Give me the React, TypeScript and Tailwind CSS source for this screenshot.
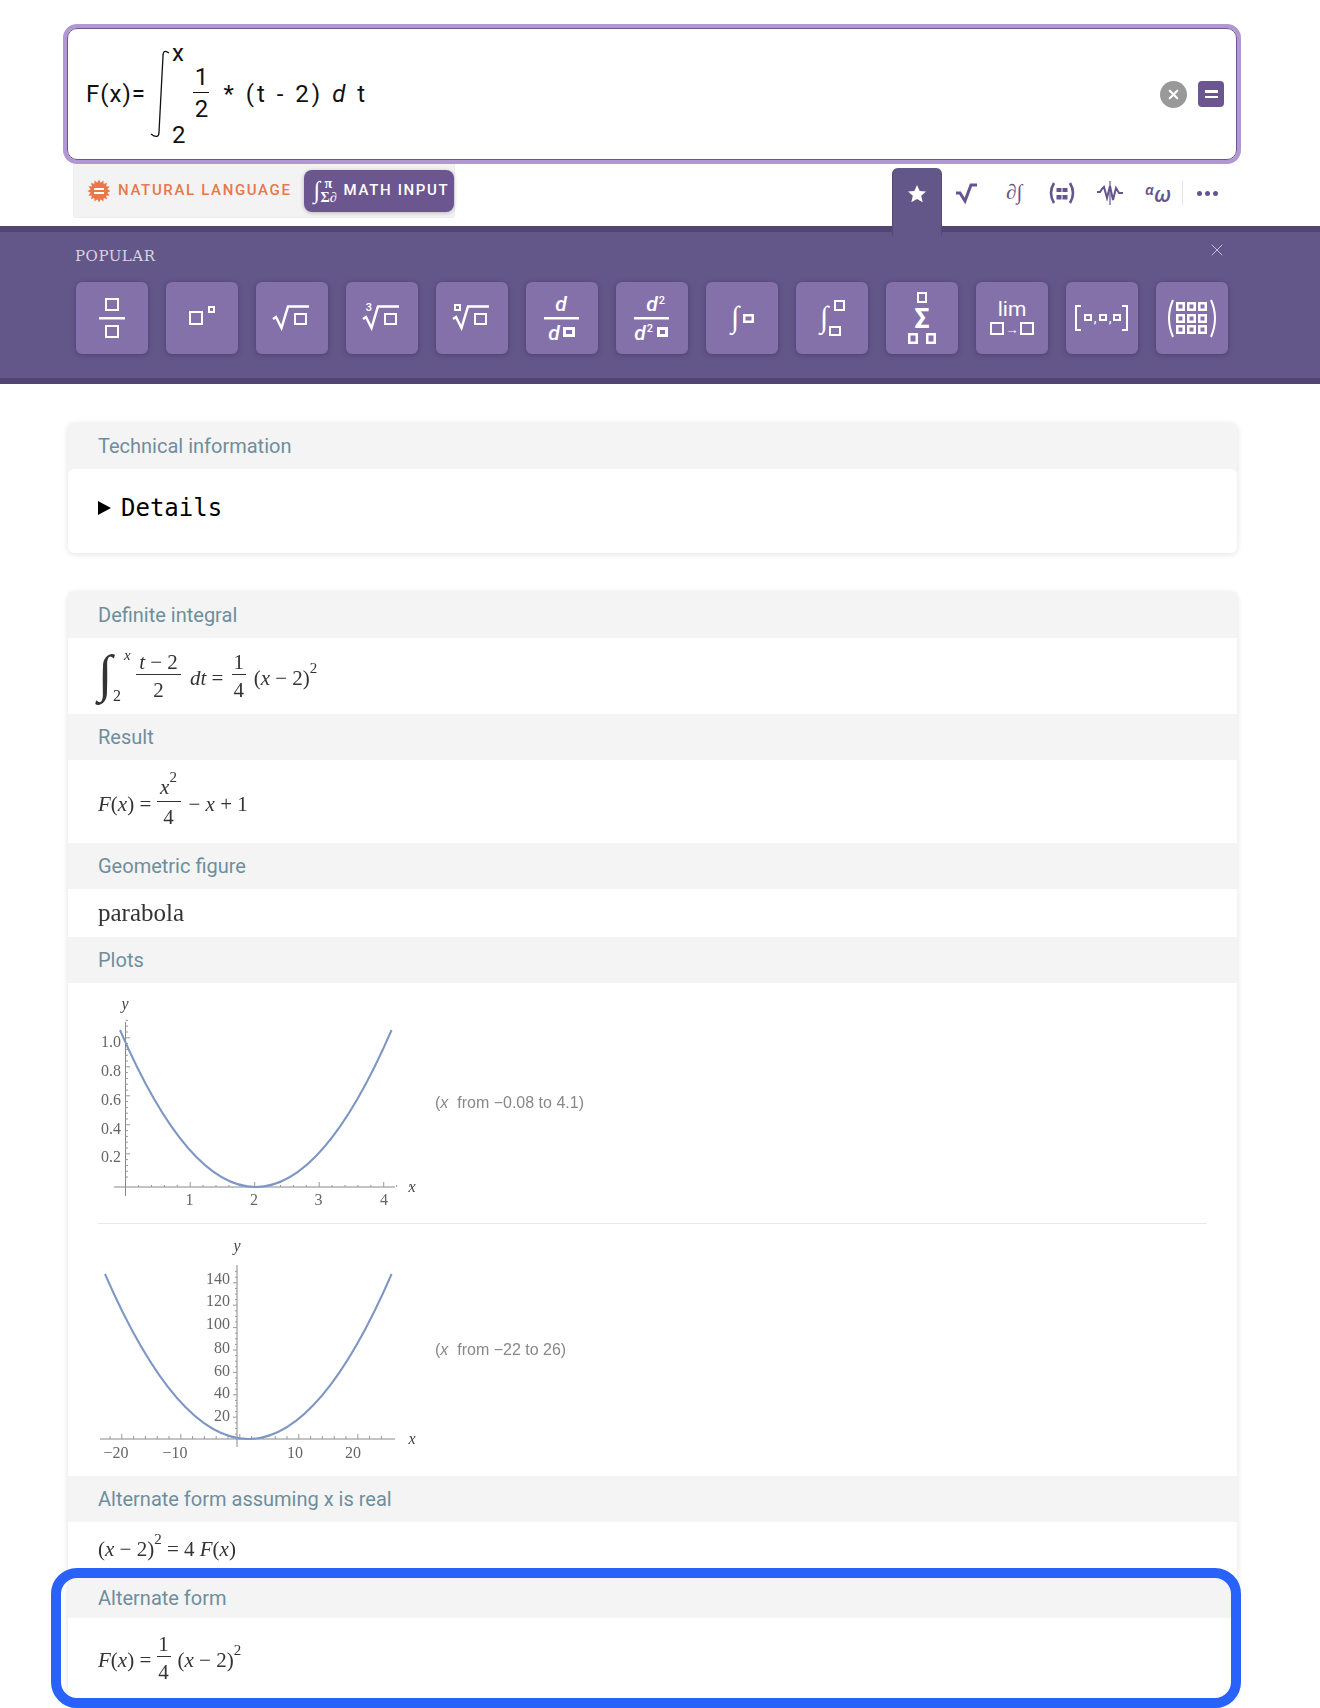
import type { ReactNode } from 'react'
import { X } from 'lucide-react'

const serif = { fontFamily: '"Liberation Serif", serif' }

function Sq({ x, y, w, h, sw = 2 }: { x: number; y: number; w: number; h: number; sw?: number }) {
  return <rect x={x + sw / 2} y={y + sw / 2} width={w - sw} height={h - sw} fill="none" stroke="#fff" strokeWidth={sw} />
}

function Root() {
  return <path d="M17 37 L20 35 L25.5 46 L32 24.5 L53 24.5" fill="none" stroke="#fff" strokeWidth="2.5" />
}

function Label({ x, y, size, children, italic, weight = 500, family = 'Roboto, sans-serif' }: {
  x: number; y: number; size: number; children: ReactNode; italic?: boolean; weight?: number; family?: string
}) {
  return (
    <text x={x} y={y} fontSize={size} fill="#fff" textAnchor="middle" fontWeight={weight} fontStyle={italic ? 'italic' : 'normal'} fontFamily={family}>
      {children}
    </text>
  )
}

const keys: ReactNode[] = [
  <>
    <Sq x={29} y={16} w={14} h={13} />
    <rect x={23} y={35} width={26} height={2.5} fill="#fff" />
    <Sq x={29} y={43} w={14} h={13} />
  </>,
  <>
    <Sq x={23} y={29} w={14} h={14} />
    <Sq x={42} y={24} w={7} h={7} />
  </>,
  <>
    <Root />
    <Sq x={38} y={31} w={13} h={12} />
  </>,
  <>
    <Root />
    <Sq x={38} y={31} w={13} h={12} />
    <Label x={23} y={29} size={11}>3</Label>
  </>,
  <>
    <Root />
    <Sq x={38} y={31} w={13} h={12} />
    <Sq x={18} y={22} w={7} h={7} />
  </>,
  <>
    <Label x={35} y={29} size={21} italic>d</Label>
    <rect x={18} y={35} width={35} height={2.5} fill="#fff" />
    <Label x={28} y={58} size={21} italic>d</Label>
    <Sq x={37} y={45} w={12} h={10} sw={3} />
  </>,
  <>
    <Label x={36} y={29} size={21} italic>d</Label>
    <Label x={46} y={22} size={11}>2</Label>
    <rect x={18} y={35} width={35} height={2.5} fill="#fff" />
    <Label x={24} y={58} size={21} italic>d</Label>
    <Label x={34} y={50} size={11}>2</Label>
    <Sq x={41} y={45} w={11} h={10} sw={3} />
  </>,
  <>
    <Label x={29} y={45} size={30} family="'Liberation Serif', serif" weight={400} italic>∫</Label>
    <Sq x={37} y={32} w={11} h={9} sw={2.5} />
  </>,
  <>
    <Label x={28} y={45} size={30} family="'Liberation Serif', serif" weight={400} italic>∫</Label>
    <Sq x={38} y={18} w={11} h={11} />
    <Sq x={33} y={44} w={12} h={10} />
  </>,
  <>
    <Sq x={31} y={10} w={10} h={11} />
    <Label x={36} y={46} size={27} weight={700}>Σ</Label>
    <Sq x={22} y={51} w={10} h={11} sw={2.5} />
    <Sq x={40} y={51} w={10} h={11} sw={2.5} />
  </>,
  <>
    <Label x={36} y={34} size={21} weight={400}>lim</Label>
    <Sq x={14} y={40} w={14} h={13} />
    <Label x={36} y={52} size={13} weight={700}>→</Label>
    <Sq x={44} y={40} w={14} h={13} />
  </>,
  <>
    <path d="M15 24 L10 24 L10 48 L15 48 M56 24 L61 24 L61 48 L56 48" fill="none" stroke="#fff" strokeWidth="2" />
    <Sq x={18} y={32} w={8} h={7} />
    <Sq x={33} y={32} w={8} h={7} />
    <Sq x={47} y={32} w={8} h={7} />
    <Label x={29} y={40} size={12}>,</Label>
    <Label x={44} y={40} size={12}>,</Label>
  </>,
  <>
    <path d="M17 18 Q9 36 17 55 M55 18 Q63 36 55 55" fill="none" stroke="#fff" strokeWidth="2" />
    {[20, 32, 43].flatMap((y) => [20, 31, 42].map((x) => <Sq key={`${x}-${y}`} x={x} y={y} w={9} h={9} sw={2.5} />))}
  </>,
]

function Burst() {
  const pts = Array.from({ length: 32 }, (_, i) => {
    const r = i % 2 === 0 ? 11.5 : 8.5
    const a = (i * Math.PI) / 16
    return `${12 + r * Math.cos(a)},${12 + r * Math.sin(a)}`
  }).join(' ')
  return (
    <svg width="24" height="24" viewBox="0 0 24 24" className="shrink-0">
      <polygon points={pts} fill="#e8774a" />
      <rect x="7" y="9" width="10" height="2" fill="#fff" />
      <rect x="7" y="13" width="10" height="2" fill="#fff" />
    </svg>
  )
}

function TabIcons() {
  return (
    <>
      <div className="w-[48px] flex justify-center items-center">
        <svg width="24" height="22" viewBox="0 0 24 22"><path d="M2 11 L6 11 L11 19 L17 3 L23 3" fill="none" stroke="#65558f" strokeWidth="3" /></svg>
      </div>
      <div className="w-[48px] flex justify-center items-center text-[#65558f] text-[21px] font-bold italic" style={serif}>∂∫</div>
      <div className="w-[48px] flex justify-center items-center">
        <svg width="28" height="22" viewBox="0 0 28 22" fill="#65558f">
          <path d="M6 1 Q0 11 6 21 M22 1 Q28 11 22 21" fill="none" stroke="#65558f" strokeWidth="2.6" />
          <rect x="8.5" y="6" width="5" height="4" /><rect x="14.5" y="6" width="5" height="4" />
          <rect x="8.5" y="13" width="5" height="4.5" /><rect x="14.5" y="13" width="5" height="4.5" />
        </svg>
      </div>
      <div className="w-[48px] flex justify-center items-center">
        <svg width="28" height="24" viewBox="0 0 28 24" fill="none" stroke="#65558f">
          <path d="M1 11 L4 11 L6 8 L8 6 L11 17 L14 5 L17 19 L20 7 L23 12 L27 12" strokeWidth="2" />
          <path d="M14 0 L14 24" strokeWidth="1.2" />
        </svg>
      </div>
      <div className="w-[48px] flex justify-center items-center text-[#65558f] font-semibold italic leading-none" style={{ fontFamily: '"Noto Sans", sans-serif' }}>
        <span className="text-[15px] -mt-[8px]">α</span>
        <span className="text-[21px] mt-[3px]">ω</span>
      </div>
      <div className="w-px h-[24px] bg-[#e5e5e5] self-center" />
      <div className="w-[48px] flex justify-center items-center gap-[3px]">
        <span className="w-[5px] h-[5px] rounded-full bg-[#65558f]" />
        <span className="w-[5px] h-[5px] rounded-full bg-[#65558f]" />
        <span className="w-[5px] h-[5px] rounded-full bg-[#65558f]" />
      </div>
    </>
  )
}

function Frac({ top, bottom, w, className = '' }: { top: ReactNode; bottom: ReactNode; w: number; className?: string }) {
  return (
    <span className={`inline-flex flex-col items-center ${className}`} style={{ width: w }}>
      <span className="leading-[24px]">{top}</span>
      <span className="h-px w-full bg-[#333]" />
      <span className="leading-[24px] mt-[3px]">{bottom}</span>
    </span>
  )
}

function Sup({ children }: { children: ReactNode }) {
  return <span className="text-[15px] relative -top-[12px]">{children}</span>
}

function Formula({ children, className = '' }: { children: ReactNode; className?: string }) {
  return (
    <div className={`flex items-center text-[21px] text-[#333] whitespace-pre blur-[0.3px] ${className}`} style={serif}>
      {children}
    </div>
  )
}

function Base({ children, className = '' }: { children: ReactNode; className?: string }) {
  return <span className={`relative top-[3px] ${className}`}>{children}</span>
}

function Section({ title, h, hh = 46, children, className = '' }: { title: string; h: number; hh?: number; children: ReactNode; className?: string }) {
  return (
    <section>
      <h3 className="bg-[#f4f4f4] pl-[30px] flex items-center text-[20px] text-[#6e8e9e] font-normal" style={{ height: hh, fontFamily: 'Roboto, sans-serif' }}>
        {title}
      </h3>
      <div className={`bg-white px-[30px] ${className}`} style={{ height: h }}>{children}</div>
    </section>
  )
}

function PlotText({ x, y, children, anchor = 'middle', italic }: { x: number; y: number; children: ReactNode; anchor?: 'middle' | 'end'; italic?: boolean }) {
  return (
    <text x={x} y={y} fontSize="16" fill={italic ? '#444' : '#666'} textAnchor={anchor} fontStyle={italic ? 'italic' : 'normal'} fontFamily='"Liberation Serif", serif'>
      {children}
    </text>
  )
}

function PlotOne() {
  return (
    <svg width="320" height="240" viewBox="98 983 320 240" className="shrink-0 blur-[0.4px]">
      <path d="M114 1187 L395 1187 M125.5 1022 L125.5 1196" stroke="#888" strokeWidth="1" fill="none" />
      {Array.from({ length: 22 }, (_, i) => <path key={i} d={`M${138.6 + i * 12.9} 1187 L${138.6 + i * 12.9} ${i % 5 === 4 ? 1182 : 1185}`} stroke="#999" />)}
      {Array.from({ length: 28 }, (_, i) => <path key={i} d={`M125.5 ${1177 - i * 5.8} L${i % 5 === 4 ? 130 : 128} ${1177 - i * 5.8}`} stroke="#999" />)}
      <path d="M120 1030 Q255.6 1344 391.6 1030" fill="none" stroke="#7d96c4" strokeWidth="2" />
      {[['1.0', 1047], ['0.8', 1076], ['0.6', 1105], ['0.4', 1134], ['0.2', 1162]].map(([t, y]) => (
        <PlotText key={t} x={121} y={Number(y)} anchor="end">{t}</PlotText>
      ))}
      {[['1', 189.5], ['2', 254], ['3', 318.6], ['4', 384]].map(([t, x]) => (
        <PlotText key={t} x={Number(x)} y={1205}>{t}</PlotText>
      ))}
      <PlotText x={125} y={1009} italic>y</PlotText>
      <PlotText x={412} y={1192} italic>x</PlotText>
    </svg>
  )
}

function PlotTwo() {
  return (
    <svg width="320" height="250" viewBox="98 1225 320 250" className="shrink-0 blur-[0.4px]">
      <path d="M100 1439 L395 1439 M237 1265 L237 1447" stroke="#888" strokeWidth="1" fill="none" />
      {Array.from({ length: 24 }, (_, i) => <path key={i} d={`M${110 + i * 11.8} 1439 L${110 + i * 11.8} ${i % 5 === 1 ? 1434 : 1436}`} stroke="#999" />)}
      {Array.from({ length: 30 }, (_, i) => <path key={i} d={`M237 ${1434 - i * 5.6} L${i % 4 === 3 ? 233 : 235} ${1434 - i * 5.6}`} stroke="#999" />)}
      <path d="M105 1274 Q248.7 1604 391.6 1274" fill="none" stroke="#7d96c4" strokeWidth="2" />
      {[['140', 1284], ['120', 1306], ['100', 1329], ['80', 1353], ['60', 1376], ['40', 1398], ['20', 1421]].map(([t, y]) => (
        <PlotText key={t} x={230} y={Number(y)} anchor="end">{t}</PlotText>
      ))}
      {[['−20', 116], ['−10', 175], ['10', 295], ['20', 353]].map(([t, x]) => (
        <PlotText key={t} x={Number(x)} y={1458}>{t}</PlotText>
      ))}
      <PlotText x={237} y={1251} italic>y</PlotText>
      <PlotText x={412} y={1444} italic>x</PlotText>
    </svg>
  )
}

function Caption({ children }: { children: ReactNode }) {
  return <p className="ml-[17px] text-[16px] text-[#888] blur-[0.3px]" style={{ fontFamily: '"Liberation Sans", sans-serif' }}>{children}</p>
}

export default function App() {
  const rob = { fontFamily: 'Roboto, sans-serif' }
  return (
    <div className="w-[1320px] h-[1708px] overflow-hidden bg-white pt-[24px]" style={rob}>
      {/* input */}
      <div className="ml-[63px] w-[1178px] h-[140px] border-[4px] border-[#b197d3] rounded-[14px]">
        <div className="h-full border border-[#6b5690] rounded-[10px] bg-white flex items-center pl-[18px] pr-[12px] text-[24px] text-[#111]">
          <span className="tracking-[1px]">F(x)=</span>
          <svg width="22" height="88" viewBox="0 0 22 88" className="ml-[2px] shrink-0">
            <path d="M21 3 C17 0 15 1 15 6 L11 82 C11 87 8 88 3 84" fill="none" stroke="#111" strokeWidth="1.3" />
          </svg>
          <span className="flex flex-col justify-between h-[110px] ml-[2px] leading-[28px]">
            <span>x</span>
            <span>2</span>
          </span>
          <span className="inline-flex flex-col items-center w-[16px] ml-[8px] -mt-[2px]">
            <span className="leading-[30px]">1</span>
            <span className="h-px w-full bg-[#111]" />
            <span className="leading-[30px] mt-[1px]">2</span>
          </span>
          <span className="ml-[14px] tracking-[3px] whitespace-pre">* (t - 2) <i>d</i> t</span>
          <span className="ml-auto w-[27px] h-[27px] rounded-full bg-[#999] flex items-center justify-center">
            <X size={15} color="#fff" strokeWidth={3.5} />
          </span>
          <span className="ml-[11px] w-[26px] h-[26px] rounded-[4px] bg-[#6b5690] flex flex-col items-center justify-center gap-[3px]">
            <span className="w-[13px] h-[2.5px] bg-white" />
            <span className="w-[13px] h-[2.5px] bg-white" />
          </span>
        </div>
      </div>

      {/* mode and tabs */}
      <div className="h-[62px] flex items-start pl-[73px] pr-[89px] relative z-10">
        <div className="w-[382px] h-[54px] bg-[#f3f3f3] rounded-b-[4px] border-b border-x border-[#ececec] flex items-center pl-[13px]">
          <Burst />
          <span className="ml-[7px] text-[15px] font-medium tracking-[1.65px] text-[#e8774a] whitespace-nowrap">NATURAL LANGUAGE</span>
          <div className="ml-[12px] w-[152px] h-[42px] rounded-[8px] bg-[#6b5690] shadow-[0_1px_4px_rgba(0,0,0,0.25)] flex items-center pl-[10px] text-white">
            <span className="relative w-[27px] h-[26px] shrink-0 font-bold leading-none" style={serif}>
              <span className="absolute left-0 top-0 text-[24px] italic">∫</span>
              <span className="absolute left-[11px] -top-[1px] text-[14px]">π</span>
              <span className="absolute left-[7px] top-[13px] text-[14px]">Σ∂</span>
            </span>
            <span className="ml-[3px] text-[15px] font-medium tracking-[1.65px] whitespace-nowrap">MATH INPUT</span>
          </div>
        </div>
        <div className="ml-auto flex h-[62px]">
          <div className="w-[50px] h-[68px] mt-[4px] -mb-[10px] rounded-t-[6px] bg-[#635688] border-x border-[#564878] flex items-start justify-center pt-[16px]">
            <svg width="20" height="20" viewBox="0 0 20 20"><polygon points="10,1 12.7,7 19,7.6 14.2,11.8 15.7,18.3 10,14.9 4.3,18.3 5.8,11.8 1,7.6 7.3,7" fill="#fff" /></svg>
          </div>
          <div className="flex h-[58px] mt-[4px] pb-[8px]"><TabIcons /></div>
        </div>
      </div>

      {/* keypad */}
      <div className="h-[158px] bg-[#635688] border-y-[6px] border-[#524573] px-[75px] relative">
        <div className="h-[48px] flex items-center justify-between">
          <span className="text-[15px] text-[#d9d2e6] tracking-[0.5px]" style={{ fontFamily: '"DejaVu Serif", serif' }}>POPULAR</span>
          <X size={20} color="#d9d2e6" strokeWidth={1} className="absolute right-[93px] top-[8px]" />
        </div>
        <div className="mt-[2px] flex gap-[18px] ml-[1px]">
          {keys.map((k, i) => (
            <button key={i} className="w-[72px] h-[72px] rounded-[6px] bg-[#8471aa] shadow-[0_1px_5px_rgba(40,25,70,0.35)] shrink-0">
              <svg width="72" height="72" viewBox="0 0 72 72">{k}</svg>
            </button>
          ))}
        </div>
      </div>

      {/* technical */}
      <div className="mt-[39px] ml-[68px] w-[1169px] h-[130px] rounded-[6px] shadow-[0_1px_6px_rgba(0,0,0,0.12)] overflow-hidden bg-[#f4f4f4]">
        <h3 className="h-[46px] pl-[30px] flex items-center text-[20px] font-normal text-[#6e8e9e]">Technical information</h3>
        <div className="h-[84px] bg-white rounded-t-[6px] pl-[30px] flex items-center text-[24px] text-black pb-[6px]" style={{ fontFamily: '"DejaVu Sans Mono", monospace' }}>
          <span className="w-0 h-0 border-y-[7px] border-y-transparent border-l-[13px] border-l-black mr-[10px]" />
          Details
        </div>
      </div>

      {/* results */}
      <div className="mt-[39px] ml-[68px] w-[1169px] rounded-t-[6px] shadow-[0_1px_6px_rgba(0,0,0,0.12)] bg-white">
        <Section title="Definite integral" h={76} className="flex items-center">
          <Formula>
            <span className="relative w-[27px] h-[60px] shrink-0">
              <span className="absolute left-0 -top-[7px] text-[52px] leading-[70px]">∫</span>
              <span className="absolute left-[26px] -top-[2px] text-[15px] italic">x</span>
              <span className="absolute left-[15px] top-[38px] text-[16px]">2</span>
            </span>
            <Frac w={45} className="ml-[11px]" top={<><i>t</i> − 2</>} bottom="2" />
            <Base className="ml-[9px]"><i>dt</i> = </Base>
            <Frac w={14} className="ml-[3px]" top="1" bottom="4" />
            <Base className="ml-[8px]">(<i>x</i> − 2)<Sup>2</Sup></Base>
          </Formula>
        </Section>
        <Section title="Result" h={83} className="flex items-center">
          <Formula>
            <Base><i>F</i>(<i>x</i>) = </Base>
            <Frac w={24} top={<><i>x</i><Sup>2</Sup></>} bottom="4" />
            <Base className="ml-[8px]">− <i>x</i> + 1</Base>
          </Formula>
        </Section>
        <Section title="Geometric figure" h={48} className="flex items-center">
          <span className="text-[25px] text-[#333] blur-[0.3px]" style={serif}>parabola</span>
        </Section>
        <Section title="Plots" h={493}>
          <div className="h-[241px] border-b border-[#e8e8e8] flex items-center">
            <PlotOne />
            <Caption>(<i>x</i>&nbsp; from −0.08 to 4.1)</Caption>
          </div>
          <div className="h-[252px] flex items-center">
            <PlotTwo />
            <Caption>(<i>x</i>&nbsp; from −22 to 26)</Caption>
          </div>
        </Section>
        <Section title="Alternate form assuming x is real" h={56} className="pt-[12px]">
          <Formula><span className="whitespace-pre">(<i>x</i> − 2)<Sup>2</Sup> = 4 <i>F</i>(<i>x</i>)</span></Formula>
        </Section>
        <div className="relative">
          <Section title="Alternate form" hh={40} h={80} className="flex items-center">
            <Formula>
              <Base><i>F</i>(<i>x</i>) = </Base>
              <Frac w={14} top="1" bottom="4" />
              <Base className="ml-[7px]">(<i>x</i> − 2)<Sup>2</Sup></Base>
            </Formula>
          </Section>
          <div className="absolute -left-[17px] -right-[4px] -top-[10px] -bottom-[10px] border-[10px] border-[#2962fa] rounded-[26px]" />
        </div>
      </div>
    </div>
  )
}
